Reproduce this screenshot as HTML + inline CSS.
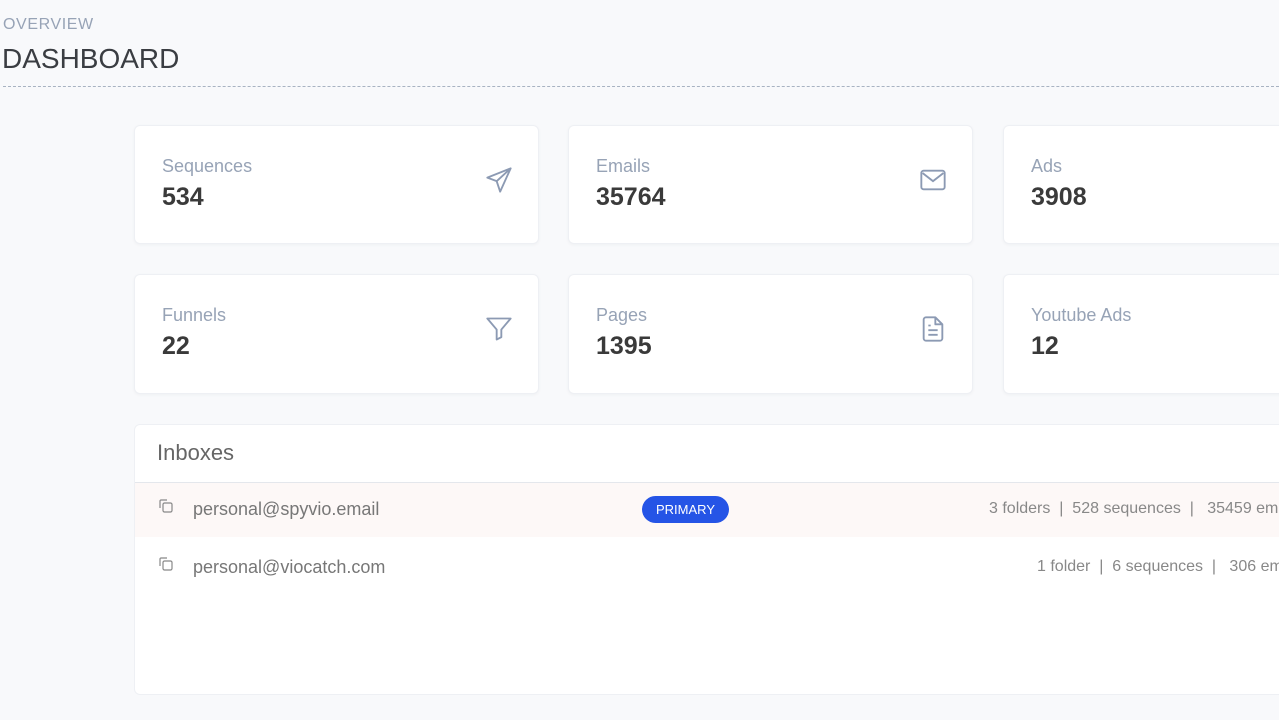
<!DOCTYPE html>
<html><head><meta charset="utf-8"><style>
*{box-sizing:border-box;margin:0;padding:0}
body{width:1279px;height:720px;overflow:hidden;background:#f8f9fb;font-family:"Liberation Sans",sans-serif;position:relative}
.ov{position:absolute;left:3px;top:16px;font-size:16px;color:#97a3b6;letter-spacing:.6px}
.h1{position:absolute;left:2px;top:43px;font-size:28px;color:#3a3d42}
.line{position:absolute;left:3px;right:0;top:86px;border-top:1px dashed #a8b3c2}
.card{position:absolute;background:#fff;border-radius:6px;box-shadow:0 1px 3px rgba(0,0,0,.04);border:1px solid #eef0f4}
.lbl{position:absolute;left:27px;top:30px;font-size:18px;color:#97a3b6}
.num{position:absolute;left:27px;top:57px;font-size:25px;font-weight:bold;color:#3a3a3a}
.ic{position:absolute;left:350px;top:40px}
.panel{position:absolute;left:134px;top:424px;width:1160px;height:271px;background:#fff;border:1px solid #eef0f4;border-radius:6px}
.ph{height:58px;border-bottom:1px solid #e4e7ec;font-size:22px;color:#666;padding:15px 0 0 22px}
.row{position:relative;height:54px;font-size:18px;color:#777}
.row .e{position:absolute;left:58px;top:16px}
.row .cp{position:absolute;left:23px;top:15px}
.row .s{position:absolute;top:17px;font-size:16px;color:#888;white-space:nowrap}
.badge{position:absolute;left:507px;top:13px;background:#2554e6;color:#fff;font-size:13px;border-radius:14px;padding:6px 14px}
</style></head><body>
<div class="ov">OVERVIEW</div>
<div class="h1">DASHBOARD</div>
<div class="line"></div>

<div class="card" style="left:134px;top:125px;width:405px;height:119px"><div class="lbl">Sequences</div><div class="num">534</div>
<svg class="ic" width="28" height="28" viewBox="0 0 24 24" fill="none" stroke="#8c9ab3" stroke-width="1.6" stroke-linejoin="round"><path d="M22 2L2 10l8 3 3 9z M22 2L10 13"/></svg></div>
<div class="card" style="left:568px;top:125px;width:405px;height:119px"><div class="lbl">Emails</div><div class="num">35764</div>
<svg class="ic" width="28" height="28" viewBox="0 0 24 24" fill="none" stroke="#8c9ab3" stroke-width="1.6"><rect x="2" y="4" width="20" height="16" rx="2"/><path d="M3 6l9 7 9-7"/></svg></div>
<div class="card" style="left:1003px;top:125px;width:300px;height:119px"><div class="lbl">Ads</div><div class="num">3908</div></div>

<div class="card" style="left:134px;top:274px;width:405px;height:120px"><div class="lbl">Funnels</div><div class="num">22</div>
<svg class="ic" width="28" height="28" viewBox="0 0 24 24" fill="none" stroke="#8c9ab3" stroke-width="1.6" stroke-linejoin="round"><path d="M2 3h20l-8 9.5V19l-4 2v-8.5z"/></svg></div>
<div class="card" style="left:568px;top:274px;width:405px;height:120px"><div class="lbl">Pages</div><div class="num">1395</div>
<svg class="ic" width="28" height="28" viewBox="0 0 24 24" fill="none" stroke="#8c9ab3" stroke-width="1.6" stroke-linejoin="round"><path d="M14 2H6a2 2 0 0 0-2 2v16a2 2 0 0 0 2 2h12a2 2 0 0 0 2-2V8z M14 2v6h6 M8 13h8 M8 17h8 M8 9h2"/></svg></div>
<div class="card" style="left:1003px;top:274px;width:300px;height:120px"><div class="lbl">Youtube Ads</div><div class="num">12</div></div>

<div class="panel">
<div class="ph">Inboxes</div>
<div class="row" style="background:#fdf8f7">
<svg class="cp" width="16" height="16" viewBox="0 0 16 16" fill="none" stroke="#888" stroke-width="1.2"><path d="M2 10V3a1 1 0 0 1 1-1h6"/><rect x="5" y="5" width="9" height="9" rx="1.5"/></svg>
<div class="e">personal@spyvio.email</div><div class="badge">PRIMARY</div>
<div class="s" style="left:854px">3 folders &nbsp;| &nbsp;528 sequences &nbsp;| &nbsp; 35459 emails</div></div>
<div class="row" style="height:60px;top:4px">
<svg class="cp" width="16" height="16" viewBox="0 0 16 16" fill="none" stroke="#888" stroke-width="1.2"><path d="M2 10V3a1 1 0 0 1 1-1h6"/><rect x="5" y="5" width="9" height="9" rx="1.5"/></svg>
<div class="e">personal@viocatch.com</div>
<div class="s" style="left:902px">1 folder &nbsp;| &nbsp;6 sequences &nbsp;| &nbsp; 306 emails</div></div>
</div>
</body></html>
